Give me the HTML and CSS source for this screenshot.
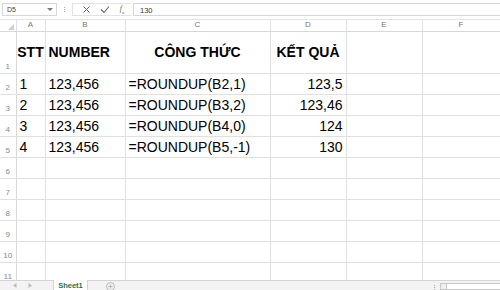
FILE: index.html
```html
<!DOCTYPE html>
<html lang="vi">
<head>
    <meta charset="UTF-8">
    <title>ROUNDUP</title>
    <link rel="stylesheet" href="styles.css">
</head>
<body>
    <div class="formula-bar">
        <div class="name-box">
            <span>D5</span>
            <svg class="caret" width="6" height="4" viewBox="0 0 6 4"><path d="M0 0h6L3 3z" fill="#777"/></svg>
        </div>
        <div class="grip"><i></i><i></i><i></i></div>
        <div class="fx-buttons">
            <svg width="9" height="9" viewBox="0 0 9 9"><path d="M1.5 1.5l6 6M7.5 1.5l-6 6" stroke="#666" stroke-width="1" fill="none"/></svg>
            <svg width="10" height="9" viewBox="0 0 10 9"><path d="M1 4.5l3 3L9 1.5" stroke="#666" stroke-width="1.1" fill="none"/></svg>
            <span class="fx">f<sub>x</sub></span>
        </div>
        <div class="formula-input">130</div>
    </div>

    <div class="sheet">
        <table class="grid">
            <colgroup>
                <col class="c-row">
                <col class="c-a">
                <col class="c-b">
                <col class="c-c">
                <col class="c-d">
                <col class="c-e">
                <col class="c-f">
            </colgroup>
            <tr class="col-head">
                <th class="corner"><svg width="6" height="6" viewBox="0 0 6 6"><path d="M6 0v6H0z" fill="#cfcfcf"/></svg></th>
                <th>A</th><th>B</th><th>C</th><th>D</th><th>E</th><th>F</th>
            </tr>
            <tr class="tall">
                <th class="row-num">1</th>
                <td class="bold center">STT</td>
                <td class="bold">NUMBER</td>
                <td class="bold center">CÔNG THỨC</td>
                <td class="bold center">KẾT QUẢ</td>
                <td></td><td></td>
            </tr>
            <tr>
                <th class="row-num">2</th>
                <td>1</td><td>123,456</td><td>=ROUNDUP(B2,1)</td><td class="num">123,5</td><td></td><td></td>
            </tr>
            <tr>
                <th class="row-num">3</th>
                <td>2</td><td>123,456</td><td>=ROUNDUP(B3,2)</td><td class="num">123,46</td><td></td><td></td>
            </tr>
            <tr>
                <th class="row-num">4</th>
                <td>3</td><td>123,456</td><td>=ROUNDUP(B4,0)</td><td class="num">124</td><td></td><td></td>
            </tr>
            <tr>
                <th class="row-num">5</th>
                <td>4</td><td>123,456</td><td>=ROUNDUP(B5,-1)</td><td class="num">130</td><td></td><td></td>
            </tr>
            <tr><th class="row-num">6</th><td></td><td></td><td></td><td></td><td></td><td></td></tr>
            <tr><th class="row-num">7</th><td></td><td></td><td></td><td></td><td></td><td></td></tr>
            <tr><th class="row-num">8</th><td></td><td></td><td></td><td></td><td></td><td></td></tr>
            <tr><th class="row-num">9</th><td></td><td></td><td></td><td></td><td></td><td></td></tr>
            <tr><th class="row-num">10</th><td></td><td></td><td></td><td></td><td></td><td></td></tr>
            <tr><th class="row-num">11</th><td></td><td></td><td></td><td></td><td></td><td></td></tr>
        </table>
    </div>

    <div class="tabs">
        <div class="tab-nav">
            <svg width="4" height="5" viewBox="0 0 4 5"><path d="M3.5 0v5L0 2.5z" fill="#bbb"/></svg>
            <svg width="4" height="5" viewBox="0 0 4 5"><path d="M0.5 0v5L4 2.5z" fill="#bbb"/></svg>
        </div>
        <div class="tab active">Sheet1</div>
        <div class="tab-add">
            <svg width="9" height="9" viewBox="0 0 9 9"><circle cx="4.5" cy="4.5" r="4" stroke="#aaa" fill="none" stroke-width="0.8"/><path d="M4.5 2.3v4.4M2.3 4.5h4.4" stroke="#aaa" stroke-width="0.8"/></svg>
        </div>
        <div class="tab-spacer"></div>
        <div class="grip small"><i></i><i></i><i></i></div>
        <div class="hscroll"><span class="hscroll-btn"></span></div>
    </div>
</body>
</html>
```

FILE: styles.css
```css
* {
    margin: 0;
    padding: 0;
    box-sizing: border-box;
}

body {
    width: 500px;
    height: 290px;
    overflow: hidden;
    background: #fff;
    font-family: "Liberation Sans", Arial, sans-serif;
    color: #000;
}

/* formula bar */
.formula-bar {
    height: 20px;
    display: flex;
    align-items: center;
    padding: 0 0 0 2px;
    border-bottom: 1px solid #e2e2e2;
}

.name-box {
    width: 55px;
    height: 13px;
    border: 1px solid #d6d6d6;
    display: flex;
    align-items: center;
    justify-content: space-between;
    padding: 0 3px 0 4px;
    font-size: 7px;
    color: #444;
}

.grip {
    width: 15px;
    display: flex;
    flex-direction: column;
    align-items: center;
    gap: 1px;
}

.grip i {
    width: 1px;
    height: 1px;
    background: #aaa;
}

.fx-buttons {
    width: 59px;
    height: 13px;
    border: 1px solid #e2e2e2;
    border-right: none;
    display: flex;
    align-items: center;
    justify-content: space-around;
    padding: 0 2px 0 4px;
}

.fx {
    font-family: "Liberation Serif", serif;
    font-style: italic;
    font-size: 8px;
    color: #666;
}

.fx sub {
    font-size: 5px;
}

.formula-input {
    flex: 1;
    height: 13px;
    margin-left: 2px;
    border: 1px solid #d6d6d6;
    border-right: none;
    font-size: 7.5px;
    color: #333;
    padding: 2px 0 0 6px;
}

/* grid */
.sheet {
    height: 260px;
    overflow: hidden;
}

.grid {
    border-collapse: collapse;
    table-layout: fixed;
    width: 500px;
}

.c-row { width: 16px; }
.c-a { width: 29px; }
.c-b { width: 80px; }
.c-c { width: 145px; }
.c-d { width: 76px; }
.c-e { width: 76px; }
.c-f { width: 78px; }

.grid th,
.grid td {
    border-right: 1px solid #e0e0e0;
    border-bottom: 1px solid #e0e0e0;
    white-space: nowrap;
    overflow: visible;
}

.grid tr {
    height: 21px;
}

.grid tr.col-head {
    height: 11px;
}

.grid tr.tall {
    height: 42px;
}

.col-head th {
    font-weight: normal;
    font-size: 8px;
    color: #777;
    text-align: center;
    border-bottom-color: #d8d8d8;
    line-height: 10px;
}

.col-head th.corner {
    text-align: right;
    vertical-align: bottom;
    padding: 0 2px 1px 0;
    line-height: 0;
}

.row-num {
    font-weight: normal;
    font-size: 8px;
    color: #888;
    text-align: center;
    vertical-align: bottom;
    padding-bottom: 2px;
    border-right-color: #d8d8d8 !important;
}

.grid td {
    font-size: 14px;
    padding: 0 3px;
    vertical-align: middle;
}

.grid td.bold {
    font-weight: bold;
}

.grid td.center {
    text-align: center;
    padding: 0;
}

.grid td.num {
    text-align: right;
}

/* sheet tabs */
.tabs {
    height: 10px;
    display: flex;
    align-items: stretch;
    background: #f3f3f3;
    border-top: 1px solid #d4d4d4;
}

.tab-nav {
    width: 53px;
    display: flex;
    align-items: center;
    gap: 11px;
    padding-left: 13px;
}

.tab {
    width: 35px;
    background: #fff;
    border-left: 1px solid #d4d4d4;
    border-right: 1px solid #d4d4d4;
    margin-top: -1px;
    font-size: 7.5px;
    font-weight: bold;
    color: #217346;
    text-align: center;
    padding-top: 1px;
}

.tab-add {
    width: 45px;
    display: flex;
    align-items: center;
    justify-content: center;
    padding-top: 2px;
}

.tab-spacer {
    flex: 1;
}

.grip.small {
    width: 10px;
    justify-content: center;
    padding-top: 3px;
}

.hscroll {
    width: 60px;
    margin: 2px 0 0 1px;
    background: #fff;
    border: 1px solid #c8c8c8;
    border-right: none;
    display: flex;
}

.hscroll-btn {
    width: 6px;
    border-right: 1px solid #c8c8c8;
    background: #f0f0f0;
}
```
